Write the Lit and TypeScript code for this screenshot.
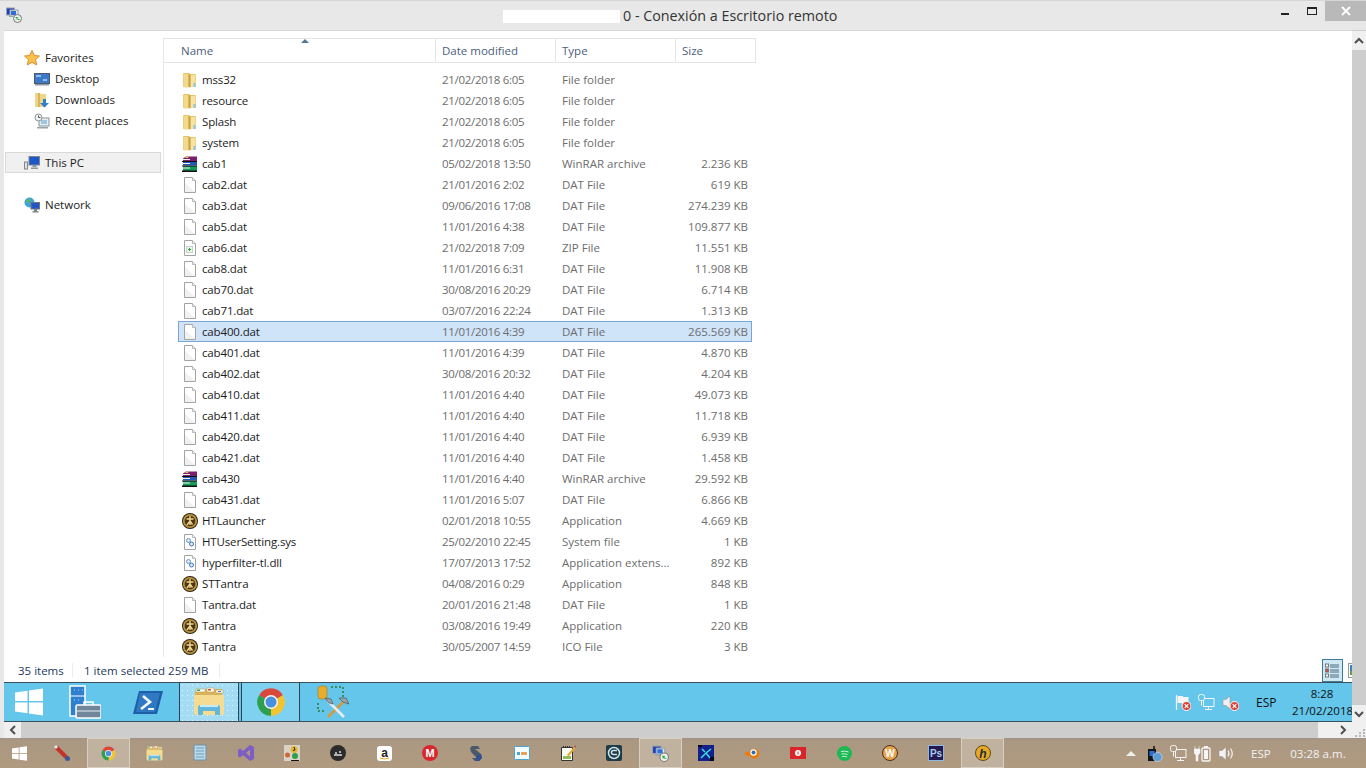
import { LitElement, html, css, svg } from 'lit'
import { customElement } from 'lit/decorators.js'

type Kind = 'folder' | 'dat' | 'rar' | 'zip' | 'coin' | 'sys'
type Row = [string, string, string, string, Kind]

const rows: Row[] = [
  ['mss32', '21/02/2018 6:05', 'File folder', '', 'folder'],
  ['resource', '21/02/2018 6:05', 'File folder', '', 'folder'],
  ['Splash', '21/02/2018 6:05', 'File folder', '', 'folder'],
  ['system', '21/02/2018 6:05', 'File folder', '', 'folder'],
  ['cab1', '05/02/2018 13:50', 'WinRAR archive', '2.236 KB', 'rar'],
  ['cab2.dat', '21/01/2016 2:02', 'DAT File', '619 KB', 'dat'],
  ['cab3.dat', '09/06/2016 17:08', 'DAT File', '274.239 KB', 'dat'],
  ['cab5.dat', '11/01/2016 4:38', 'DAT File', '109.877 KB', 'dat'],
  ['cab6.dat', '21/02/2018 7:09', 'ZIP File', '11.551 KB', 'zip'],
  ['cab8.dat', '11/01/2016 6:31', 'DAT File', '11.908 KB', 'dat'],
  ['cab70.dat', '30/08/2016 20:29', 'DAT File', '6.714 KB', 'dat'],
  ['cab71.dat', '03/07/2016 22:24', 'DAT File', '1.313 KB', 'dat'],
  ['cab400.dat', '11/01/2016 4:39', 'DAT File', '265.569 KB', 'dat'],
  ['cab401.dat', '11/01/2016 4:39', 'DAT File', '4.870 KB', 'dat'],
  ['cab402.dat', '30/08/2016 20:32', 'DAT File', '4.204 KB', 'dat'],
  ['cab410.dat', '11/01/2016 4:40', 'DAT File', '49.073 KB', 'dat'],
  ['cab411.dat', '11/01/2016 4:40', 'DAT File', '11.718 KB', 'dat'],
  ['cab420.dat', '11/01/2016 4:40', 'DAT File', '6.939 KB', 'dat'],
  ['cab421.dat', '11/01/2016 4:40', 'DAT File', '1.458 KB', 'dat'],
  ['cab430', '11/01/2016 4:40', 'WinRAR archive', '29.592 KB', 'rar'],
  ['cab431.dat', '11/01/2016 5:07', 'DAT File', '6.866 KB', 'dat'],
  ['HTLauncher', '02/01/2018 10:55', 'Application', '4.669 KB', 'coin'],
  ['HTUserSetting.sys', '25/02/2010 22:45', 'System file', '1 KB', 'sys'],
  ['hyperfilter-tl.dll', '17/07/2013 17:52', 'Application extens...', '892 KB', 'sys'],
  ['STTantra', '04/08/2016 0:29', 'Application', '848 KB', 'coin'],
  ['Tantra.dat', '20/01/2016 21:48', 'DAT File', '1 KB', 'dat'],
  ['Tantra', '03/08/2016 19:49', 'Application', '220 KB', 'coin'],
  ['Tantra', '30/05/2007 14:59', 'ICO File', '3 KB', 'coin'],
]

const SELECTED = 12

const icon = (w: number, h: number, body: unknown) =>
  html`<svg width=${w} height=${h} viewBox="0 0 ${w} ${h}">${body}</svg>`

const folder = () => icon(16, 16, svg`
  <path d="M1 2a1 1 0 0 1 1-1h5l1 1h5a1 1 0 0 1 1 1v12H2a1 1 0 0 1-1-1z" fill="#e6c566"/>
  <path d="M1.500 2h5v13.500H2.500a1 1 0 0 1-1-1z" fill="#f2d98e"/>
  <path d="M8.500 3h5v12h-5z" fill="#f7e3a4"/>
  <path d="M6.500 1.500L8.500 3v12.500l-2-.5z" fill="#c9a247"/>
  <path d="M11.500 11h2v4h-2z" fill="#86c6e0"/>`)

const dat = () => icon(16, 16, svg`
  <path d="M2.500.5h8l3 3v12h-11z" fill="#fff" stroke="#a3a3a3"/>
  <path d="M10.500.5v3h3" fill="#f1f1f1" stroke="#b9b9b9"/>
  <path d="M3 6l10 9H3z" fill="#f1f1f1"/>`)

const zip = () => icon(16, 16, svg`
  <path d="M2.500.5h8l3 3v12h-11z" fill="#fff" stroke="#a3a3a3"/>
  <path d="M10.500.5v3h3" fill="#f1f1f1" stroke="#b9b9b9"/>
  <rect x="4.500" y="6.500" width="6" height="6" fill="#eef5ee" stroke="#c5d3c5"/>
  <path d="M7.500 8v3M6 9.500h3" stroke="#27a745"/>`)

const sys = () => icon(16, 16, svg`
  <path d="M2.500.5h8l3 3v12h-11z" fill="#fff" stroke="#a3a3a3"/>
  <path d="M10.500.5v3h3" fill="#f1f1f1" stroke="#b9b9b9"/>
  <circle cx="6.500" cy="6.500" r="2" fill="#dbe9f6" stroke="#6b9acb"/>
  <circle cx="9.500" cy="10" r="2" fill="#dbe9f6" stroke="#3f78b5"/>`)

const rar = (s = 16) => html`<svg width=${s} height=${s} viewBox="0 0 16 16">
  <path d="M1 2.500L4 .5h11v4.500H1z" fill="#7a1f6e"/>
  <path d="M4 .5h3l-1 1.500H3z" fill="#e3c34a"/>
  <path d="M1 5.500h14v4H1z" fill="#2456b8"/>
  <path d="M1 10h14v5H1z" fill="#159a58"/>
  <path d="M0 3h8v1H0zM0 7h8v1H0zM0 11.500h8v1H0z" fill="#f4f4f4"/>
  <path d="M0 5h15v1H0zM0 9.500h15v1H0zM0 14.500h15v1.500H0z" fill="#111"/>
</svg>`

const coin = () => icon(16, 16, svg`
  <circle cx="8" cy="8" r="8" fill="#2b2012"/>
  <circle cx="8" cy="8" r="6.200" fill="#4a3517" stroke="#b8933f" stroke-width="1.800"/>
  <path d="M8 3v9M4.500 6h7M8 8l-3 4M8 8l2.500 3.500" stroke="#f0d88c" stroke-width="1.400" fill="none"/>`)

const fileIcons = { folder, dat, zip, sys, rar, coin }

const chrome = (s: number) => html`<svg width=${s} height=${s} viewBox="0 0 24 24">
  <path d="M12 12L2.470 6.500A11 11 0 0 1 21.530 6.500z" fill="#d9483b"/>
  <path d="M12 12L21.530 6.500A11 11 0 0 1 12 23z" fill="#f4c430"/>
  <path d="M12 12L12 23A11 11 0 0 1 2.470 6.500z" fill="#2e9e4f"/>
  <circle cx="12" cy="12" r="5.600" fill="#f4f4f4"/>
  <circle cx="12" cy="12" r="4.400" fill="#4a8fe0"/>
</svg>`

const winLogo = (s: number) => html`<svg width=${s} height=${s} viewBox="0 0 28 28">
  <path d="M0 4.500L12.500 2.700v10.300H0zM14 2.500L28 .5v12.500H14zM0 14.500h12.500v10.800L0 23.500zM14 14.500h14v13L14 25.500z" fill="#fff"/>
</svg>`

const explorerIcon = (s: number) => html`<svg width=${s} height=${s} viewBox="0 0 32 32">
  <path d="M2 5h9l2-2h16v24H2z" fill="#d9b45a"/>
  <path d="M3 3h9v3H3zM14 2h7v4h-7zM23 4h7v3h-7z" fill="#fdfdf6" stroke="#b8974a" stroke-width=".5"/>
  <path d="M4 3.500h3v1.500H4z" fill="#3aa655"/><path d="M15 3h3v1.500h-3z" fill="#d2483b"/><path d="M25 5h3v1h-3z" fill="#3b82c4"/>
  <path d="M1 9h30v18a2 2 0 0 1-2 2H3a2 2 0 0 1-2-2z" fill="#f5dc92"/>
  <path d="M7 19h18c1 0 2 1 2 2v8h-5v-4H10v4H5v-8c0-1 1-2 2-2z" fill="#62b7dc"/>
  <path d="M7 19h18v2H7z" fill="#c5ebf8"/>
</svg>`

const redX = () => svg`
  <circle cx="12.500" cy="12" r="4.500" fill="#d8433a" stroke="#fff" stroke-width="1"/>
  <path d="M10.700 10.200l3.600 3.600M14.300 10.200l-3.600 3.600" stroke="#fff" stroke-width="1.200"/>`

const flag = (x = false) => icon(17, 17, svg`
  <path d="M2.500 1v15" stroke="#f5f5f5" stroke-width="1.300"/>
  <path d="M3.500 2h5l1 1h5v7h-6l-1-1h-4z" fill="#f5f5f5"/>
  ${x ? redX() : ''}`)

const netIcon = (stroke: string, fill: string) => icon(17, 17, svg`
  <rect x="5.500" y="4.500" width="10.500" height="8" fill=${fill} stroke=${stroke}/>
  <rect x=".5" y=".5" width="6" height="6" rx="2" fill=${fill} stroke=${stroke}/>
  <path d="M3.500 6.500v5M10.500 12.500v3M7 15.500h7" stroke=${stroke} fill="none"/>`)

const speaker = (x: boolean, c: string) => icon(17, 17, svg`
  <path d="M1 5.500h3l4-3.500v13l-4-3.500H1z" fill=${c} stroke="#8c8c8c" stroke-width=".5"/>
  ${x ? redX() : svg`<path d="M10 5.500q2 3 0 6M12.500 3.500q3.500 5 0 10" stroke=${c} fill="none" stroke-width="1.200"/>`}`)

const remoteIcon = (s: number) => html`<svg width=${s} height=${s} viewBox="0 0 16 16">
  <rect x=".5" y="1" width="8" height="7" fill="#1f3fb8" stroke="#9aa2ad"/>
  <path d="M3 8h4v2H3z" fill="#9aa2ad"/>
  <rect x="4" y="3" width="8" height="6" fill="#dfe3e8" stroke="#9aa2ad"/>
  <rect x="5" y="4" width="5" height="4" fill="#2b6fd8"/>
  <circle cx="11.500" cy="11.500" r="4" fill="#eef3ee" stroke="#777"/>
  <path d="M9.500 10.500h2M10 12.500l2-2M11.500 12.500h2" stroke="#1f9e3c"/>
</svg>`

@customElement('app-root')
export class AppRoot extends LitElement {
  static styles = css`
    :host {
      display: flex;
      flex-direction: column;
      width: 1366px;
      height: 768px;
      overflow: hidden;
      background: #e8e8e8;
      font-family: "Open Sans", "Noto Sans", sans-serif;
      font-size: 11.5px;
      color: #1c1c1c;
    }
    svg { display: block; flex: none; }

    .titlebar {
      height: 30px;
      flex: none;
      display: flex;
      align-items: flex-start;
      position: relative;
      border-top: 1px solid #d6d6d6;
      box-sizing: border-box;
    }
    .app-icon { margin: 6px 0 0 6px; }
    .title {
      margin-left: 481px;
      margin-top: 5px;
      display: flex;
      align-items: center;
      font-size: 14.3px;
      line-height: 20px;
      color: #333;
      white-space: nowrap;
    }
    .redact { width: 117px; height: 13px; background: #fff; margin-right: 3px; }
    .winbtns { margin-left: auto; display: flex; align-items: flex-start; }
    .minb { width: 8px; height: 2px; background: #222; margin-top: 12px; }
    .maxb { width: 8px; height: 5px; border: 1px solid #222; border-top-width: 2px; margin: 6px 0 0 18px; }
    .close {
      width: 41px;
      height: 20px;
      margin-left: 8px;
      background: #b9b9b9;
      display: flex;
      align-items: center;
      justify-content: center;
    }

    .window { flex: 1; display: flex; min-height: 0; }
    .client {
      flex: 1;
      margin-left: 4px;
      border-top: 1px solid #d9d9d9;
      display: flex;
      flex-direction: column;
      background: #fff;
      min-width: 0;
    }
    .explorer { flex: 1; display: flex; min-height: 0; }

    .nav { width: 159px; flex: none; padding-top: 16px; box-sizing: border-box; color: #1c1c1c; }
    .nav-row { height: 21px; display: flex; align-items: center; margin-left: 1px; box-sizing: border-box; }
    .nav-row .lbl { margin-left: 5px; }
    .nav-top { padding-left: 19px; }
    .nav-sub { padding-left: 29px; }
    .nav-sub .lbl { margin-left: 5px; }
    .nav-gap { margin-top: 21px; }
    .nav-sel { background: #f0f0f0; box-shadow: inset 0 0 0 1px #d9d9d9; width: 156px; }

    .listing { flex: 1; border-left: 1px solid #e8e8e8; margin-top: 7px; }
    .header {
      position: relative;
      width: 592px;
      height: 25px;
      box-sizing: border-box;
      border-top: 1px solid #e5e5e5;
      border-bottom: 1px solid #e5e5e5;
      border-right: 1px solid #e5e5e5;
      display: flex;
      color: #4c607a;
    }
    .hcell { display: flex; align-items: center; padding-left: 6px; box-sizing: border-box; border-right: 1px solid #e5e5e5; }
    .hcell:last-child { border-right: 0; }
    .hname { width: 272px; padding-left: 17px; }
    .hdate, .htype { width: 120px; }
    .hsize { width: 79px; }
    .sort {
      position: absolute;
      left: 137px;
      top: 0;
      width: 0;
      height: 0;
      border-left: 4px solid transparent;
      border-right: 4px solid transparent;
      border-bottom: 4px solid #54768f;
    }
    .rows { margin: 6px 0 0 14px; width: 574px; }
    .row { height: 21px; display: flex; align-items: center; box-sizing: border-box; border: 1px solid transparent; white-space: nowrap; }
    .row.sel { background: #cfe3f9; border-color: #7aa4d1; }
    .cell-icon { margin-left: 3px; width: 16px; }
    .cell-name { width: 240px; margin-left: 4px; color: #1c1c1c; letter-spacing: -0.15px; }
    .cell-date { width: 120px; color: #6d6d6d; letter-spacing: -0.3px; }
    .cell-type { width: 115px; color: #6d6d6d; }
    .cell-size { width: 71px; text-align: right; color: #6d6d6d; }

    .status {
      height: 25px;
      flex: none;
      display: flex;
      align-items: center;
      color: #1e395b;
      position: relative;
      box-sizing: border-box;
      padding-top: 1px;
    }
    .st-count { margin-left: 14px; }
    .st-sep { width: 1px; height: 14px; background: #ececec; }
    .st-a { width: 54px; }
    .st-b { margin-left: 11px; }
    .st-c { margin-left: 3px; }
    .st-d { margin-left: 10px; }
    .views { margin-left: auto; display: flex; align-self: flex-end; height: 23px; }
    .view-on {
      width: 19px;
      border: 1px solid #3f7a97;
      background: #cfe8f3;
      display: flex;
      align-items: center;
      justify-content: center;
    }
    .view-off { width: 4px; margin-left: 5px; padding-top: 4px; overflow: hidden; }

    .remote-bar {
      height: 40px;
      flex: none;
      background: #63c6ea;
      border-top: 1px solid #3c4f5c;
      border-bottom: 1px solid #3c4f5c;
      box-sizing: border-box;
      display: flex;
      align-items: center;
    }
    .rb-start { margin-left: 11px; }
    .rb-server { margin-left: 26px; }
    .rb-ps { margin-left: 32px; }
    .rb-task {
      height: 100%;
      width: 60px;
      box-sizing: border-box;
      display: flex;
      align-items: center;
      justify-content: center;
      border-left: 1px solid #2f4350;
      border-right: 1px solid #2f4350;
    }
    .rb-explorer {
      margin-left: 16px;
      background-color: #a3dcf3;
      background-image: radial-gradient(#e2f5fc 0.8px, transparent 1px);
      background-size: 5px 5px;
    }
    .rb-chrome { margin-left: 2px; background: #7fd2ef; width: 59px; }
    .rb-tools { margin-left: 17px; }
    .rb-tray { margin-left: auto; display: flex; align-items: center; }
    .rb-tray svg { margin-right: 7px; }
    .rb-lang { margin-left: 10px; width: 36px; color: #111; font-size: 12px; }
    .clock { width: 60px; text-align: center; line-height: 17px; color: #111; font-size: 11.5px; white-space: nowrap; }

    .vbar { width: 14px; flex: none; background: #cdcdcd; display: flex; flex-direction: column; }
    .vbtn { background: #f0f0f0; display: flex; align-items: center; justify-content: center; flex: none; }
    .vup { height: 19px; margin-top: 1px; }
    .vthumb { flex: 1; }
    .vdown { height: 17px; }

    .hbar { height: 16px; flex: none; display: flex; background: #e8e8e8; }
    .hb-left { width: 17px; margin-left: 4px; background: #f0f0f0; display: flex; align-items: center; justify-content: center; }
    .hb-track { flex: 1; background: #cdcdcd; }
    .hb-right { width: 34px; background: #f0f0f0; display: flex; align-items: center; justify-content: flex-end; padding-right: 4px; box-sizing: border-box; }
    .hb-corner { width: 14px; background: #f0f0f0; display: flex; align-items: flex-end; justify-content: flex-end; }

    .taskbar {
      height: 30px;
      flex: none;
      display: flex;
      align-items: center;
      background: linear-gradient(#a39385 0, #ab9882 3px, #b09a80 100%);
      color: #f2f2f2;
    }
    .tb-start { width: 39px; display: flex; justify-content: center; padding-right: 1px; box-sizing: border-box; }
    .tb-item { width: 46px; height: 30px; display: flex; align-items: center; justify-content: center; flex: none; box-sizing: border-box; }
    .tb-item.on { background: #c0b29f; box-shadow: inset 0 0 0 1px #d8cfc3; width: 43px; margin: 0 1px 0 2px; }
    .tb-tray { margin-left: auto; display: flex; align-items: center; }
    .tb-tri { width: 0; height: 0; border-left: 5px solid transparent; border-right: 5px solid transparent; border-bottom: 5px solid #efefef; margin-right: 10px; }
    .tb-tray svg { margin-right: 7px; }
    .tb-lang { margin-left: 9px; width: 26px; font-size: 11.5px; }
    .tb-clock { width: 82px; margin-right: 7px; text-align: center; font-size: 11.5px; white-space: nowrap; }
  `

  private chevron(d: string, c = '#505050') {
    return html`<svg width="10" height="10" viewBox="0 0 10 10"><path d=${d} fill="none" stroke=${c} stroke-width="2"/></svg>`
  }

  private renderNav() {
    return html`<div class="nav">
      <div class="nav-row nav-top">
        ${icon(16, 16, svg`<path d="M8 .5l2.300 5 5.200.5-4 3.500 1.200 5.500L8 12.300 3.300 15l1.200-5.500-4-3.500 5.200-.5z" fill="#f6c24b" stroke="#e08a2c"/>`)}
        <span class="lbl">Favorites</span>
      </div>
      <div class="nav-row nav-sub">
        ${icon(16, 16, svg`<rect x=".5" y="2.500" width="15" height="10" fill="#3f78c9" stroke="#4a5a6a"/><path d="M2 4h5v2H2zM9 8h4v2H9z" fill="#8fbdf0"/><path d="M1 13h14v1.500H1z" fill="#8d9aa6"/>`)}
        <span class="lbl">Desktop</span>
      </div>
      <div class="nav-row nav-sub">
        ${icon(16, 16, svg`<path d="M1 1h5l1 1h5v13H1z" fill="#f0d487"/><path d="M4 1h2v14H4z" fill="#d8b55c"/><path d="M9 7h3v4h3l-4.500 4.500L6 11h3z" fill="#2f7fd0"/>`)}
        <span class="lbl">Downloads</span>
      </div>
      <div class="nav-row nav-sub">
        ${icon(16, 16, svg`<rect x="5" y="5" width="10" height="8" fill="#e8edf0" stroke="#8a939a"/><circle cx="4.500" cy="4.500" r="3.500" fill="#f4f4f4" stroke="#8a939a"/><path d="M4.500 2.500v2h2" stroke="#555" fill="none"/><path d="M7 7h6v4H7z" fill="#9fc6df"/><path d="M3 14h11v1.500H3z" fill="#9aa2a8"/>`)}
        <span class="lbl">Recent places</span>
      </div>
      <div class="nav-row nav-top nav-gap nav-sel">
        ${icon(16, 16, svg`<rect x="5" y="1.500" width="10.500" height="8.500" fill="#1d56c9" stroke="#7d868e"/><path d="M8.500 10h4v2h-4zM7 12.500h7v1.500H7z" fill="#8d959c"/><rect x=".5" y="7" width="3" height="7" fill="#dfe3e6" stroke="#7d868e"/>`)}
        <span class="lbl">This PC</span>
      </div>
      <div class="nav-row nav-top nav-gap">
        ${icon(16, 16, svg`<circle cx="5.500" cy="5.500" r="5" fill="#3fa6d8"/><path d="M2 3.500l3-2 1.500 2-2 3zM7 7l2-1v3H7z" fill="#5cb85c"/><rect x="7" y="5.500" width="8.500" height="6.500" fill="#2256c4" stroke="#6d7780"/><path d="M10 12h3v2h-3zM8.500 14h6v1.500h-6z" fill="#7d868e"/>`)}
        <span class="lbl">Network</span>
      </div>
    </div>`
  }

  private renderList() {
    return html`<div class="listing">
      <div class="header">
        <div class="sort"></div>
        <div class="hcell hname">Name</div>
        <div class="hcell hdate">Date modified</div>
        <div class="hcell htype">Type</div>
        <div class="hcell hsize">Size</div>
      </div>
      <div class="rows">
        ${rows.map((r, i) => html`<div class="row ${i === SELECTED ? 'sel' : ''}">
          <span class="cell-icon">${fileIcons[r[4]]()}</span>
          <span class="cell-name">${r[0]}</span>
          <span class="cell-date">${r[1]}</span>
          <span class="cell-type">${r[2]}</span>
          <span class="cell-size">${r[3]}</span>
        </div>`)}
      </div>
    </div>`
  }

  private renderRemoteBar() {
    return html`<div class="remote-bar">
      <span class="rb-start">${winLogo(28)}</span>
      <span class="rb-server"><svg width="32" height="34" viewBox="0 0 32 34">
        <rect x="1" y="1" width="15" height="30" fill="#2f7fd1" stroke="#fff" stroke-width="1.500"/>
        <path d="M1 11h15" stroke="#fff"/>
        <path d="M5 5h1M9 5h1M13 5h1M5 15h1M9 15h1" stroke="#b7dcf7"/>
        <rect x="7" y="20" width="25" height="13" rx="1.500" fill="#71869a" stroke="#fff" stroke-width="1.500"/>
        <path d="M15 20v-3h9v3" fill="none" stroke="#fff" stroke-width="1.500"/>
        <path d="M7 26h25" stroke="#e5ecf2"/>
      </svg></span>
      <span class="rb-ps"><svg width="30" height="28" viewBox="0 0 30 28">
        <path d="M6 3h24l-6 23H0z" fill="#1d5fa8"/>
        <path d="M7 5h20l-5 19H3z" fill="#2f79c2"/>
        <path d="M10 8l7 6-9 7" fill="none" stroke="#f4f8fc" stroke-width="2.600"/>
        <path d="M15 21h6" stroke="#f4f8fc" stroke-width="2"/>
      </svg></span>
      <span class="rb-task rb-explorer">${explorerIcon(32)}</span>
      <span class="rb-task rb-chrome">${chrome(30)}</span>
      <span class="rb-tools"><svg width="32" height="34" viewBox="0 0 32 34">
        <rect x="1" y="1" width="9" height="13" rx="3" fill="#e6ad2e" stroke="#a97a16" stroke-width=".6"/>
        <path d="M14 2h12v12M1 18v8h8" fill="none" stroke="#2f7a3a" stroke-width="1.500" stroke-dasharray="2 2"/>
        <path d="M11 32l17-17" stroke="#d89a3a" stroke-width="2.500"/>
        <path d="M27 32L11 16" stroke="#e9eef1" stroke-width="2.500"/>
        <path d="M8 13l6 1 2 5-4-1zM22 13h7l3 6-6-2z" fill="#9aa4ab" stroke="#444" stroke-width=".6"/>
      </svg></span>
      <span class="rb-tray">
        ${flag(true)}${netIcon('#f5f5f5', '#63c6ea')}${speaker(true, '#f0f0f0')}
        <span class="rb-lang">ESP</span>
        <span class="clock">8:28<br />21/02/2018</span>
      </span>
    </div>`
  }

  private renderTaskbar() {
    return html`<div class="taskbar">
      <span class="tb-start">${winLogo(15)}</span>
      <span class="tb-item">${icon(18, 18, svg`<path d="M3 3l11 11" stroke="#c0342b" stroke-width="4"/><path d="M2 2l2 2" stroke="#e6e6e6" stroke-width="3"/><circle cx="14.500" cy="14.500" r="2.500" fill="#3c5a96"/>`)}</span>
      <span class="tb-item on">${chrome(15)}</span>
      <span class="tb-item">${explorerIcon(17)}</span>
      <span class="tb-item">${icon(16, 18, svg`<path d="M2 1h12v15H2z" fill="#bcd9ea" stroke="#6f93a8"/><path d="M4 4h8M4 7h8M4 10h8M4 13h8" stroke="#6aa0bf"/>`)}</span>
      <span class="tb-item">${icon(18, 18, svg`<path d="M13 1l4 2v12l-4 2-7-6-3 2.500L1 12V6l2-1.500L6 7zM13 5.500L9 9l4 3.500z" fill="#7c5ec4"/>`)}</span>
      <span class="tb-item">${icon(16, 16, svg`<rect width="16" height="16" fill="#d8d3c4"/><circle cx="10" cy="4.500" r="3.500" fill="#e5b52e"/><path d="M10 2l1 3-2 .5" stroke="#222" fill="none"/><circle cx="3.500" cy="10" r="2.500" fill="#d0653a"/><circle cx="11" cy="11" r="3" fill="#2e9e4f"/><path d="M7 15h8v1H7z" fill="#111"/>`)}</span>
      <span class="tb-item">${icon(16, 16, svg`<circle cx="8" cy="8" r="8" fill="#2b2b2b"/><path d="M4 10h8M5 8h2M9 7h2" stroke="#ddd" stroke-width="1.300"/>`)}</span>
      <span class="tb-item"><svg width="15" height="15" viewBox="0 0 15 15"><rect width="15" height="15" rx="3" fill="#fff"/><text x="7.500" y="11" font-size="12" font-weight="700" text-anchor="middle" font-family="Liberation Sans" fill="#222">a</text><path d="M3 12q4.500 2 9 0" stroke="#f39c12" fill="none"/></svg></span>
      <span class="tb-item"><svg width="16" height="16" viewBox="0 0 16 16"><circle cx="8" cy="8" r="8" fill="#d9272e"/><text x="8" y="12" font-size="11" font-weight="700" text-anchor="middle" font-family="Liberation Sans" fill="#fff">M</text></svg></span>
      <span class="tb-item">${icon(14, 16, svg`<path d="M3 1h6l2 3H6l6 5 1 4-3 3H6l-3-3h5L2 7 1 3z" fill="#4a5a68"/><path d="M8 10l4-1 1 4-3 3H6z" fill="#33508f"/>`)}</span>
      <span class="tb-item">${icon(16, 14, svg`<rect x=".5" y=".5" width="15" height="13" rx="1" fill="#f4fbff" stroke="#4aa5d6"/><path d="M3 6h3v3H3z" fill="#4aa5d6"/><path d="M7 6h6v3H7z" fill="#e6a15a"/>`)}</span>
      <span class="tb-item">${icon(16, 16, svg`<path d="M1.500 2.500h11v13h-11z" fill="#fbfbf3" stroke="#333"/><path d="M3 2h8" stroke="#333" stroke-dasharray="1 1" stroke-width="2"/><path d="M3 11h8v3H3z" fill="#8fbf5a"/><path d="M7 10l7-8 1.500 1.500-7 8z" fill="#e7a62e"/><path d="M14 1.500l1-1 1 1-.5 1z" fill="#b5305a"/>`)}</span>
      <span class="tb-item">${icon(16, 16, svg`<rect width="16" height="16" rx="2" fill="#1d3a46"/><circle cx="8" cy="8" r="5.500" fill="none" stroke="#cfe2e8" stroke-width="1.500"/><path d="M11 5.500H7.500a2 2 0 0 0 0 4H11" fill="none" stroke="#cfe2e8" stroke-width="1.500"/>`)}</span>
      <span class="tb-item on">${remoteIcon(17)}</span>
      <span class="tb-item">${icon(16, 16, svg`<rect width="16" height="16" fill="#14208a"/><path d="M3 13l5-5 5-4M8 8l4 5M4 4l3 3" stroke="#39e0e6" stroke-width="1.500"/><path d="M0 0h4v2H0zM12 12h4v4h-4z" fill="#06081c"/>`)}</span>
      <span class="tb-item">${icon(16, 14, svg`<path d="M0 7l6-2 1-1a5 5 0 1 1-1 6H3z" fill="#e87d0d"/><circle cx="9.500" cy="6.500" r="3.200" fill="#fff"/><circle cx="9.500" cy="6.500" r="2" fill="#2a6fb5"/>`)}</span>
      <span class="tb-item"><svg width="16" height="12" viewBox="0 0 16 12"><rect width="16" height="12" fill="#d9252a"/><circle cx="8" cy="6" r="3" fill="#fff"/><path d="M7.500 4.500h1v3h-1z" fill="#d9252a"/></svg></span>
      <span class="tb-item">${icon(15, 15, svg`<circle cx="7.500" cy="7.500" r="7.500" fill="#1db954"/><path d="M4 5.500q4-1 7.500.5M4.500 8q3-.7 6 .5M5 10.500q2.500-.5 5 .5" stroke="#cdeed8" fill="none"/>`)}</span>
      <span class="tb-item"><svg width="16" height="16" viewBox="0 0 16 16"><circle cx="8" cy="8" r="7.500" fill="#e8a24a" stroke="#4a2c1a"/><text x="8" y="12" font-size="10" font-weight="700" text-anchor="middle" font-family="Liberation Sans" fill="#fff">W</text></svg></span>
      <span class="tb-item"><svg width="16" height="16" viewBox="0 0 16 16"><rect x=".5" y=".5" width="15" height="15" fill="#241a4f" stroke="#8cb8e8"/><text x="8" y="12" font-size="10" font-weight="700" text-anchor="middle" font-family="Liberation Sans" fill="#a9c9ee">Ps</text></svg></span>
      <span class="tb-item on"><svg width="16" height="16" viewBox="0 0 16 16"><circle cx="8" cy="8" r="7.500" fill="#e8a920" stroke="#5c4a20"/><text x="8" y="12.500" font-size="12" font-weight="700" font-style="italic" text-anchor="middle" font-family="Liberation Sans" fill="#1a2a40">h</text></svg></span>
      <span class="tb-tray">
        <span class="tb-tri"></span>
        ${icon(17, 17, svg`<rect x="2" y="4" width="8" height="12" fill="#12141c"/><path d="M8 1v4" stroke="#111" stroke-width="1.500"/><path d="M3.500 6h5v5h-5z" fill="#2d6fd1"/><circle cx="11.500" cy="12" r="4.500" fill="#5c9bd6" stroke="#dce8f3" stroke-width=".6"/>`)}
        ${netIcon('#f5f5f5', '#ae9a82')}
        ${icon(17, 17, svg`<path d="M1 1v3M5 1v3M0 4h6v4l-2 2v6H2v-6L0 8z" fill="#f5f5f5" stroke="#f5f5f5" stroke-width=".6"/><rect x="8" y="3" width="8" height="13" rx="1" fill="none" stroke="#f5f5f5" stroke-width="1.300"/><path d="M10 1h4v2h-4zM10 5h4v9h-4z" fill="#f5f5f5"/>`)}
        ${speaker(false, '#f2f2f2')}
        <span class="tb-lang">ESP</span>
        <span class="tb-clock">03:28 a.m.</span>
      </span>
    </div>`
  }

  render() {
    return html`
      <div class="titlebar">
        <span class="app-icon">${remoteIcon(16)}</span>
        <span class="title"><span class="redact"></span>0 - Conexión a Escritorio remoto</span>
        <span class="winbtns">
          <span class="minb"></span>
          <span class="maxb"></span>
          <span class="close"><svg width="10" height="10" viewBox="0 0 10 10"><path d="M1 1l8 8M9 1l-8 8" stroke="#fff" stroke-width="2"/></svg></span>
        </span>
      </div>
      <div class="window">
        <div class="client">
          <div class="explorer">${this.renderNav()}${this.renderList()}</div>
          <div class="status">
            <span class="st-count st-a">35 items</span>
            <span class="st-sep"></span>
            <span class="st-b">1 item selected</span>
            <span class="st-c">259 MB</span>
            <span class="st-d st-sep"></span>
            <span class="views">
              <span class="view-on"><svg width="15" height="15" viewBox="0 0 15 15"><rect x=".5" y="1" width="3" height="3" fill="#fff" stroke="#777"/><rect x=".5" y="6" width="3" height="3" fill="#d8433a" stroke="#777"/><rect x=".5" y="11" width="3" height="3" fill="#fff" stroke="#777"/><path d="M5 2h9M5 4h9M5 7h9M5 9h9M5 12h9M5 14h9" stroke="#4c6a80"/></svg></span>
              <span class="view-off"><svg width="15" height="15" viewBox="0 0 15 15"><rect x=".5" y=".5" width="14" height="14" fill="#fff" stroke="#999"/><rect x="2" y="2" width="11" height="6" fill="#3b7fc4"/><rect x="2" y="8" width="11" height="4" fill="#6a9a4a"/></svg></span>
            </span>
          </div>
          ${this.renderRemoteBar()}
        </div>
        <div class="vbar">
          <div class="vbtn vup">${this.chevron('M1 7l4-4 4 4')}</div>
          <div class="vthumb"></div>
          <div class="vbtn vdown">${this.chevron('M1 3l4 4 4-4')}</div>
        </div>
      </div>
      <div class="hbar">
        <div class="hb-left">${this.chevron('M7 1L3 5l4 4')}</div>
        <div class="hb-track"></div>
        <div class="hb-right">${this.chevron('M3 1l4 4-4 4')}</div>
        <div class="hb-corner"><svg width="11" height="9" viewBox="0 0 11 9"><path d="M8 0h2v2H8zM4 3h2v2H4zM8 3h2v2H8zM0 6h2v2H0zM4 6h2v2H4zM8 6h2v2H8z" fill="#b9b9b9"/></svg></div>
      </div>
      ${this.renderTaskbar()}
    `
  }
}

declare global {
  interface HTMLElementTagNameMap {
    'app-root': AppRoot
  }
}
